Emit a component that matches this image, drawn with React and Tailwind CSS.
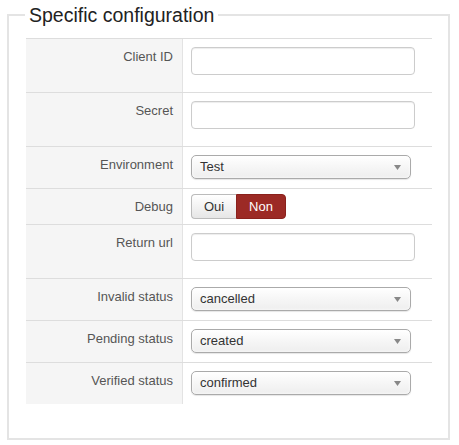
import React from "react";

const TextField = () => (
  <input
    type="text"
    className="block w-[224px] h-[28px] mb-[9px] rounded-[4px] border border-[#cccccc] bg-white px-[6px] text-[13px] text-[#555] shadow-[inset_0_1px_1px_rgba(0,0,0,0.075)] outline-none"
  />
);

const SelectBox = ({ value }) => (
  <div className="flex w-[220px] h-[24px] items-center justify-between rounded-[5px] border border-[#aaaaaa] bg-gradient-to-b from-white via-[#f6f6f6] to-[#eeeeee] pl-[8px] pr-[9px] text-[13px] text-[#333] shadow-[0_0_3px_rgba(255,255,255,1)_inset,0_1px_1px_rgba(0,0,0,0.1)]">
    <span>{value}</span>
    <svg width="7" height="5" viewBox="0 0 7 5">
      <path d="M0 0 L7 0 L3.5 5 Z" fill="#888" />
    </svg>
  </div>
);

const Toggle = () => (
  <div className="flex h-[25px] text-[13px]">
    <button className="w-[45px] rounded-l-[4px] border border-[#bbbbbb] border-r-0 bg-gradient-to-b from-white to-[#e6e6e6] text-[#333]">
      Oui
    </button>
    <button className="w-[50px] rounded-r-[4px] border border-[#8a211c] bg-[#9c2a25] text-white">
      Non
    </button>
  </div>
);

const Row = ({ label, children, pad }) => (
  <div className="flex border-t border-[#dddddd]">
    <div className="w-[157px] shrink-0 border-r border-[#e3e3e3] bg-[#f5f5f5] pt-[10px] pr-[9px] text-right text-[13px] leading-[15px] text-[#555]">
      {label}
    </div>
    <div className={`flex-1 pl-[8px] ${pad}`}>{children}</div>
  </div>
);

export default function App() {
  return (
    <div
      className="bg-white w-[459px] h-[445px] pt-[4px] pl-[7px]"
      style={{ fontFamily: '"Liberation Sans", Arial, sans-serif' }}
    >
      <fieldset className="w-[443px] h-[436px] border-2 border-[#e4e4e4] pl-[17px] pr-[16px]">
        <legend className="-ml-px px-[4px] text-[19.5px] leading-[22px] text-[#222]">
          Specific configuration
        </legend>
        <div className="mt-[12px]">
          <Row label="Client ID" pad="pt-[8px] pb-[8px]">
            <TextField />
          </Row>
          <Row label="Secret" pad="pt-[8px] pb-[8px]">
            <TextField />
          </Row>
          <Row label="Environment" pad="pt-[8px] pb-[9px]">
            <SelectBox value="Test" />
          </Row>
          <Row label="Debug" pad="pt-[5px] pb-[5px]">
            <Toggle />
          </Row>
          <Row label="Return url" pad="pt-[8px] pb-[8px]">
            <TextField />
          </Row>
          <Row label="Invalid status" pad="pt-[8px] pb-[9px]">
            <SelectBox value="cancelled" />
          </Row>
          <Row label="Pending status" pad="pt-[8px] pb-[9px]">
            <SelectBox value="created" />
          </Row>
          <Row label="Verified status" pad="pt-[8px] pb-[9px]">
            <SelectBox value="confirmed" />
          </Row>
        </div>
      </fieldset>
    </div>
  );
}
